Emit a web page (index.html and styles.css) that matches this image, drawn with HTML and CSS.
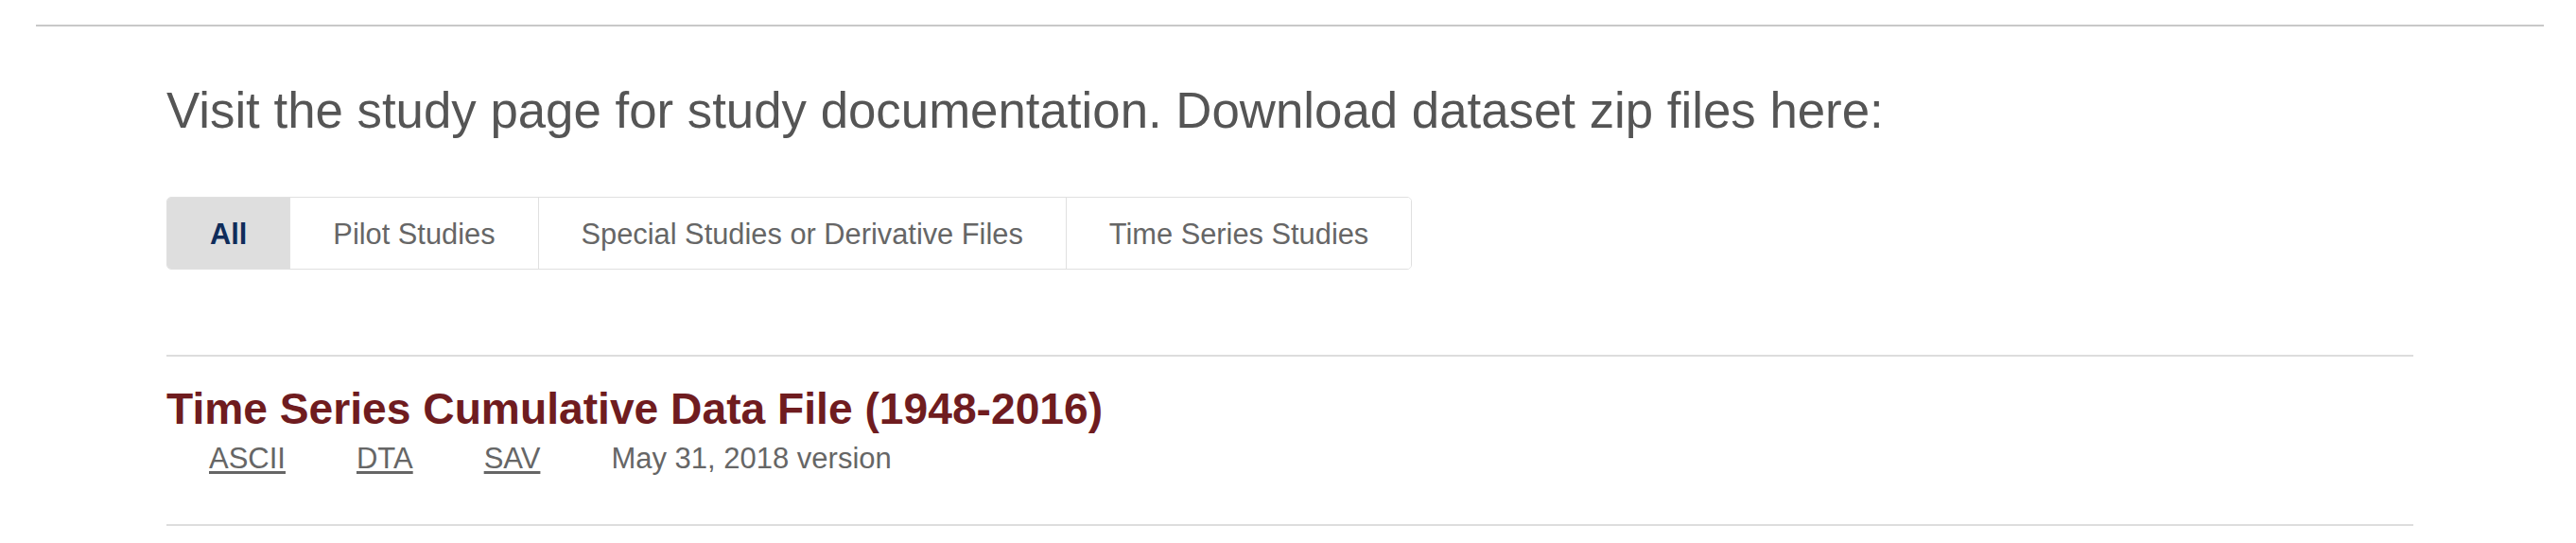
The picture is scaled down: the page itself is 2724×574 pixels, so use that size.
FILE: index.html
```html
<!DOCTYPE html>
<html lang="en">
<head>
<meta charset="utf-8">
<title>Data Center</title>
<link rel="stylesheet" href="styles.css">
</head>
<body>
<div class="page">
  <hr class="top-rule">
  <main class="content">
    <h2 class="intro">Visit the study page for study documentation. Download dataset zip files here:</h2>
    <nav class="tabs">
      <button class="tab tab-active">All</button>
      <button class="tab">Pilot Studies</button>
      <button class="tab">Special Studies or Derivative Files</button>
      <button class="tab">Time Series Studies</button>
    </nav>
    <section class="dataset-list">
      <article class="dataset">
        <h3 class="dataset-title">Time Series Cumulative Data File (1948-2016)</h3>
        <div class="dataset-links">
          <a href="#" class="file-link">ASCII</a>
          <a href="#" class="file-link">DTA</a>
          <a href="#" class="file-link">SAV</a>
          <span class="version">May 31, 2018 version</span>
        </div>
      </article>
    </section>
  </main>
</div>
</body>
</html>
```
FILE: styles.css
```css
html, body {
  margin: 0;
  padding: 0;
  background: #ffffff;
}

body {
  font-family: "Liberation Sans", Arial, sans-serif;
  color: #555555;
}

.page {
  padding: 26px 34px 0 38px;
}

.top-rule {
  margin: 0;
  border: 0;
  border-top: 2px solid #c8c8c8;
  height: 0;
}

.content {
  margin: 0 138px;
}

.intro {
  margin: 58px 0 0;
  font-size: 52.8px;
  line-height: 62px;
  font-weight: normal;
  color: #555555;
}

.tabs {
  display: inline-flex;
  margin-top: 60px;
  border: 1px solid #e0e0e0;
  border-radius: 5px;
  overflow: hidden;
}

.tab {
  font-family: "Liberation Sans", Arial, sans-serif;
  font-size: 30.8px;
  line-height: 43px;
  padding: 17px 45px 15px;
  margin: 0;
  border: 0;
  border-left: 1px solid #e0e0e0;
  background: #ffffff;
  color: #666666;
  cursor: pointer;
}

.tab:first-child {
  border-left: 0;
}

.tab-active {
  background: #dedede;
  color: #0f2c5a;
  font-weight: bold;
}

.dataset-list {
  margin-top: 90px;
}

.dataset {
  border-top: 2px solid #dddddd;
  border-bottom: 2px solid #dddddd;
  padding: 30px 0 51px;
}

.dataset-title {
  margin: 0;
  font-size: 46.2px;
  line-height: 50px;
  font-weight: bold;
  color: #6f1c1f;
}

.dataset-links {
  display: flex;
  gap: 75px;
  margin-top: 10px;
  padding-left: 45px;
  font-size: 31px;
  line-height: 36px;
}

.file-link {
  color: #666666;
  text-decoration: underline;
  text-underline-offset: 3px;
}

.version {
  color: #666666;
}
```
